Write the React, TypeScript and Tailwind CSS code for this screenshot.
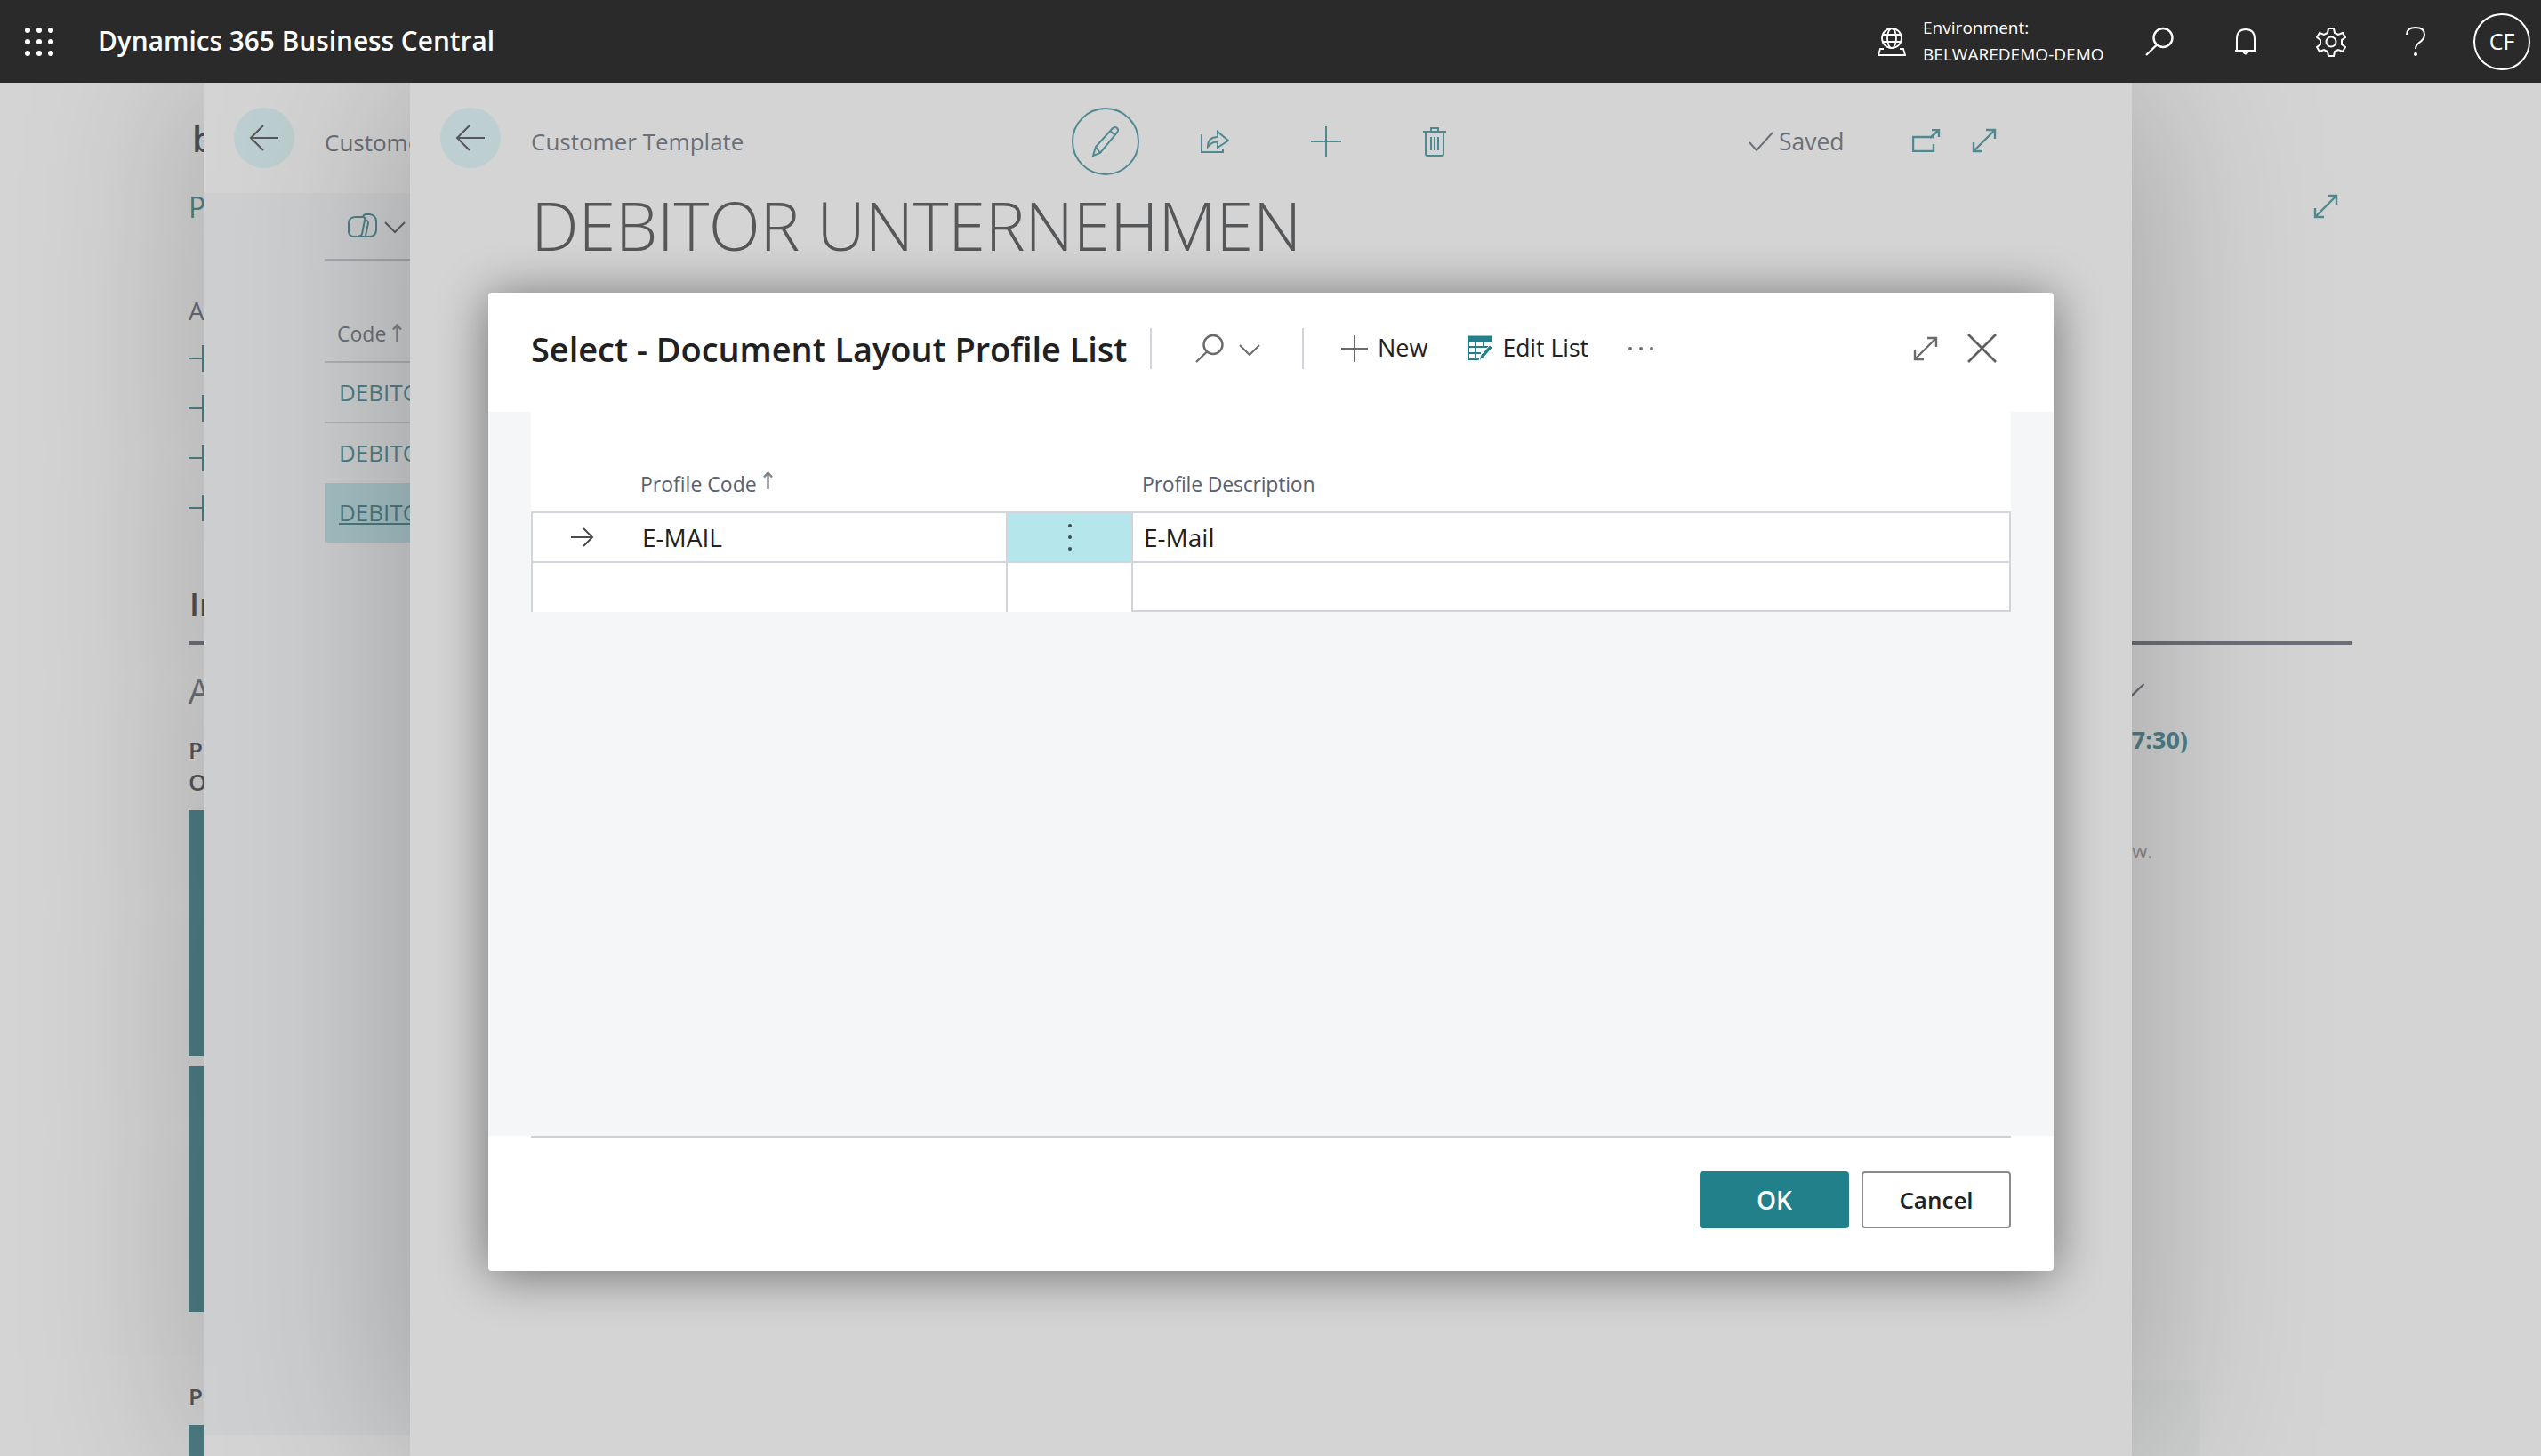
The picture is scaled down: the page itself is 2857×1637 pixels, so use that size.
import React from "react";

const font = { fontFamily: '"Open Sans", "Noto Sans", sans-serif' };

function Ico({ w, h, vb, color = "currentColor", sw = 2, children, className = "" }: { w: number; h: number; vb: string; color?: string; sw?: number; children: React.ReactNode; className?: string }) {
  return (
    <svg width={w} height={h} viewBox={vb} fill="none" stroke={color} strokeWidth={sw} className={`block shrink-0 ${className}`}>
      {children}
    </svg>
  );
}

const BackArrow = () => (
  <Ico w={34} h={30} vb="0 0 34 30" color="#555759">
    <path d="M33 15H2M16 1 2 15l14 14" />
  </Ico>
);

const Expand = ({ color, size = 30 }: { color: string; size?: number }) => (
  <Ico w={size} h={size} vb="0 0 30 30" color={color} sw={2.4}>
    <path d="M3 27 27 3M17 3h10v10M3 17v10h10" />
  </Ico>
);

const Search = ({ color, sw = 2.4 }: { color: string; sw?: number }) => (
  <Ico w={34} h={33} vb="0 0 34 33" color={color} sw={sw}>
    <circle cx="21" cy="12.5" r="10.5" />
    <path d="M14 20.5 2 32" />
  </Ico>
);

const SortUp = ({ color }: { color: string }) => (
  <Ico w={11} h={20} vb="0 0 11 20" color={color} sw={2.4}>
    <path d="M5.5 20V2M1 6.5 5.5 1.5 10 6.5" />
  </Ico>
);

function BackgroundPage() {
  return (
    <div className="absolute inset-0 bg-[#d4d4d4] pl-[212px] text-[#55585e]">
      <div className="relative h-full w-[2432px]">
        <div className="pt-[41px] pl-[4px] text-[40px] leading-[44px] font-semibold text-[#4f5154]">b</div>
        <div className="mt-[35px] text-[32px] leading-[40px] text-[#4f8187]">P</div>
        <div className="mt-[77px] text-[28px] leading-[38px] text-[#696c75]">A</div>
        <div className="flex flex-col gap-[26px] mt-[20px]">
          {[0, 1, 2, 3].map((i) => (
            <Ico key={i} w={18} h={30} vb="0 0 18 30" color="#4f8187">
              <path d="M0 15h17M16 0v30" />
            </Ico>
          ))}
        </div>
        <div className="mt-[72px] pl-[1px] text-[36px] leading-[44px] font-semibold text-[#4f5154]">In</div>
        <div className="mt-[19px] h-[4px] bg-[#6c6f79]" />
        <div className="mt-[28px] flex justify-between items-center text-[38px] leading-[46px] text-[#6c6f79]">
          <span>A</span>
          <Ico w={30} h={16} vb="0 0 30 16" color="#6c6f79" sw={1.6} className="mr-[233px]">
            <path d="M0 30 30 1" />
            <path d="M14 15 29 1" />
          </Ico>
        </div>
        <div className="mt-[26px] flex justify-between items-start text-[26px] leading-[36px] font-semibold text-[#55575a]">
          <span>P</span>
          <span className="-mt-[11px] text-[#4f8187] font-bold text-[27px] mr-[184px]">(11:17:30)</span>
        </div>
        <div className="text-[26px] leading-[36px] font-semibold text-[#55575a]">O</div>
        <div className="mt-[14px] flex justify-between items-start">
          <div className="w-[40px] h-[276px] bg-[#4f7d83]" />
          <span className="mt-[30px] mr-[224px] text-[22px] leading-[30px] text-[#8a8a8a]">w.</span>
        </div>
        <div className="mt-[12px] w-[40px] h-[276px] bg-[#4f7d83]" />
        <div className="mt-[77px] flex justify-between items-start h-[36px]">
          <span className="text-[26px] leading-[36px] font-semibold text-[#55575a]">P</span>
          <div className="mr-[170px] w-[200px] h-[90px] bg-[#cfd1d1]" />
        </div>
        <div className="mt-[14px] w-[40px] h-[60px] bg-[#4f7d83]" />
      </div>
    </div>
  );
}

function ListPanel() {
  return (
    <div className="absolute left-[229px] top-0 bottom-0 w-[400px] flex flex-col bg-[#d4d4d4] shadow-[0_0_200px_rgba(0,0,0,0.26)]">
      <div className="h-[124px] flex items-start pt-[28px] pl-[34px]">
        <div className="w-[68px] h-[68px] rounded-full bg-[#bdcfd0] flex items-center justify-center">
          <BackArrow />
        </div>
        <span className="ml-[34px] text-[26px] leading-[78px] text-[#6b6f78]">Customer</span>
      </div>
      <div className="flex-1 bg-[#cdcfd0] pl-[136px]">
        <div className="h-[76px] border-b-2 border-[#a9abb2] flex items-center pl-[26px] gap-[8px]">
          <Ico w={33} h={28} vb="0 0 33 28" color="#4f8187" sw={2}>
            <path d="M9 4h8q3 0 2 4l-3 15q-1 3-4 3H7q-5 0-6-5V10q1-6 8-6Z" />
            <path d="M17 4l1-2q1-1 3-1h4q6 1 7 7v11q-1 7-7 7h-9q-2 0-4-1" />
            <path d="M19 8q4-1 4 3l-3 14" />
          </Ico>
          <Ico w={24} h={14} vb="0 0 24 14" color="#5c5e62" className="mt-[4px]">
            <path d="M1 1l11 11L23 1" />
          </Ico>
        </div>
        <div className="h-[115px] flex items-end pb-[13px] pl-[14px] text-[23px] leading-[36px] text-[#6b6f78] gap-[7px] border-b-2 border-[#b0b1b3]">
          Code
          <span className="pb-[9px]">
            <SortUp color="#808285" />
          </span>
        </div>
        <div className="h-[68px] flex items-center pl-[16px] text-[26px] text-[#4f8187] border-b-2 border-[#b0b1b3]">DEBITOR</div>
        <div className="h-[67px] flex items-center pl-[16px] text-[26px] text-[#4f8187]">DEBITOR</div>
        <div className="h-[67px] flex items-center pl-[16px] text-[26px] text-[#4d7a80] underline bg-[#a5c1c5]">DEBITOR</div>
      </div>
      <div className="h-[24px]" />
    </div>
  );
}

function CardPanel() {
  return (
    <div className="absolute left-[461px] top-0 bottom-0 w-[1936px] bg-[#d4d4d4] shadow-[0_0_200px_rgba(0,0,0,0.26)]">
      <div className="flex items-center pt-[28px] pl-[34px]">
        <div className="self-start w-[68px] h-[68px] rounded-full bg-[#bdcfd0] flex items-center justify-center">
          <BackArrow />
        </div>
        <span className="ml-[34px] w-[608px] text-[26px] leading-[76px] text-[#6b6f78]">Customer Template</span>
        <div className="w-[76px] h-[76px] rounded-full border-2 border-[#4f8a90] flex items-center justify-center">
          <Ico w={32} h={36} vb="0 0 32 36" color="#4f8a90">
            <path d="M2 34 5 24 24 3q3-2 5 0t0 5L10 31l-8 3ZM5 24l5 7M21 6l6 5" />
          </Ico>
        </div>
        <div className="ml-[69px] -mt-[4px]">
          <Ico w={32} h={30} vb="0 0 32 30" color="#4f8a90">
            <path d="M1 9v20h24v-4M8 23q0-11 11-11V6l12 10-12 8v-6q-6-1-11 5Z" />
          </Ico>
        </div>
        <div className="ml-[92px]">
          <Ico w={34} h={34} vb="0 0 34 34" color="#4f8a90">
            <path d="M0 17h34M17 0v34" />
          </Ico>
        </div>
        <div className="ml-[92px]">
          <Ico w={26} h={34} vb="0 0 26 34" color="#4f8a90">
            <path d="M0 6h26M3 6v25q0 2 2 2h16q2 0 2-2V6M9 6V2h8v4M9 12v15M13 12v15M17 12v15" />
          </Ico>
        </div>
        <div className="ml-[340px]">
          <Ico w={28} h={24} vb="0 0 28 24" color="#6b6f78">
            <path d="M1 13l8 9L27 2" />
          </Ico>
        </div>
        <span className="ml-[6px] text-[26.5px] text-[#6b6f78] leading-[76px]">Saved</span>
        <div className="ml-[76px] -mt-[2px]">
          <Ico w={32} h={26} vb="0 0 32 26" color="#4f8a90" sw={2.4}>
            <path d="M24 9H1v16h23v-8M20 10l10-9M22 1h8v8" />
          </Ico>
        </div>
        <div className="ml-[34px] -mt-[2px]">
          <Expand color="#4f8a90" />
        </div>
      </div>
      <div className="mt-[10px] pl-[136px] text-[76px] leading-[92px] tracking-[-0.5px] font-light text-[#555759]">DEBITOR UNTERNEHMEN</div>
    </div>
  );
}

function Modal() {
  return (
    <div className="absolute left-[549px] top-[236px] w-[1760px] h-[1100px] bg-white rounded-[4px] shadow-[0_4px_55px_rgba(0,0,0,0.48)] flex flex-col overflow-hidden">
      <div className="h-[134px] pb-[9px] pl-[48px] pr-[64px] flex items-center text-[#212121]">
        <div className="w-[698px] h-[46px] pt-[2px] border-r-2 border-[#d1d5db] flex items-center text-[38px] tracking-[-0.05px] font-semibold whitespace-nowrap">
          Select - Document Layout Profile List
        </div>
        <div className="ml-[48px]">
          <Search color="#6b6b6b" />
        </div>
        <div className="ml-[16px] mt-[4px]">
          <Ico w={24} h={13} vb="0 0 24 13" color="#6b6b6b">
            <path d="M1 1l11 11L23 1" />
          </Ico>
        </div>
        <div className="ml-[47px] w-[2px] h-[46px] bg-[#d1d5db]" />
        <div className="ml-[42px]">
          <Ico w={30} h={30} vb="0 0 30 30" color="#6b6b6b">
            <path d="M0 15h30M15 0v30" />
          </Ico>
        </div>
        <span className="ml-[11px] text-[27px]">New</span>
        <div className="ml-[45px]">
          <Ico w={29} h={29} vb="0 0 29 29" color="#22808a" sw={2}>
            <path d="M0 1.5h27v5H0z" fill="#22808a" />
            <path d="M1 6v21h14M1 13h24M1 20h14M9 6v21M18 6v7" />
            <path d="M13 28l2-6L25 11l3 3-10 11-5 3Z" fill="#22808a" stroke="#ffffff" strokeWidth="1" />
          </Ico>
        </div>
        <span className="ml-[10px] text-[26.5px]">Edit List</span>
        <div className="ml-[45px] flex gap-[8px]">
          <span className="w-[4px] h-[4px] rounded-full bg-[#6b6b6b]" />
          <span className="w-[4px] h-[4px] rounded-full bg-[#6b6b6b]" />
          <span className="w-[4px] h-[4px] rounded-full bg-[#6b6b6b]" />
        </div>
        <div className="ml-auto">
          <Expand color="#6b6b6b" />
        </div>
        <div className="ml-[32px]">
          <Ico w={33} h={33} vb="0 0 33 33" color="#5f5f5f" sw={2.6}>
            <path d="M1 1l31 31M32 1 1 32" />
          </Ico>
        </div>
      </div>

      <div className="flex-1 bg-[#f5f6f8] px-[48px]">
        <div className="bg-white">
          <div className="h-[112px] flex items-end pb-[13px] text-[23px] text-[#59616f] leading-[36px]">
            <div className="w-[675px] pl-[123px] flex gap-[7px]">
              Profile Code
              <span className="pt-[4px]">
                <SortUp color="#808285" />
              </span>
            </div>
            <div className="pl-[12px] tracking-[-0.2px]">Profile Description</div>
          </div>
          <div className="flex h-[56px] border-t-2 border-[#d1d5db] text-[28px] text-[#212121]">
            <div className="w-[534px] border-l-2 border-[#d1d5db] flex items-center pl-[43px]">
              <Ico w={26} h={22} vb="0 0 26 22" color="#4b4b4b">
                <path d="M0 11h24M14 1l10 10-10 10" />
              </Ico>
              <span className="ml-[54px]">E-MAIL</span>
            </div>
            <div className="w-[141px] border-l-2 border-[#d1d5db] bg-[#b5e6eb] flex flex-col items-center justify-center gap-[9px]">
              <span className="w-[4px] h-[4px] rounded-full bg-[#3f4a4d]" />
              <span className="w-[4px] h-[4px] rounded-full bg-[#3f4a4d]" />
              <span className="w-[4px] h-[4px] rounded-full bg-[#3f4a4d]" />
            </div>
            <div className="flex-1 border-x-2 border-[#d1d5db] flex items-center pl-[12px]">E-Mail</div>
          </div>
          <div className="flex h-[57px] border-t-2 border-[#d1d5db]">
            <div className="w-[534px] border-l-2 border-[#d1d5db]" />
            <div className="w-[141px] border-l-2 border-[#d1d5db]" />
            <div className="flex-1 border-x-2 border-b-2 border-[#d1d5db]" />
          </div>
        </div>
      </div>

      <div className="h-[152px] px-[48px]">
        <div className="h-[2px] bg-[#cfcfcf]" />
        <div className="pt-[38px] flex justify-end gap-[14px] font-semibold">
          <button className="w-[168px] h-[64px] rounded-[4px] bg-[#22808a] text-white text-[28px]">OK</button>
          <button className="w-[168px] h-[64px] rounded-[4px] border-2 border-[#8a8a8a] text-[#212121] text-[26px]">Cancel</button>
        </div>
      </div>
    </div>
  );
}

export default function App() {
  return (
    <div className="w-[2857px] h-[1637px] flex flex-col overflow-hidden" style={font}>
      <header className="relative z-10 h-[93px] shrink-0 bg-[#2a2a2a] text-white flex items-center">
        <div className="ml-[28px] grid grid-cols-3 gap-[7px]">
          {Array.from({ length: 9 }).map((_, i) => (
            <span key={i} className="w-[6px] h-[6px] rounded-full bg-white" />
          ))}
        </div>
        <div className="ml-[50px] text-[29.8px] font-semibold whitespace-nowrap">Dynamics 365 Business Central</div>
        <div className="ml-auto flex items-center mr-[12px]">
          <Ico w={32} h={32} vb="0 0 32 32" color="#ffffff" sw={1.8}>
            <circle cx="16" cy="12" r="11" />
            <ellipse cx="16" cy="12" rx="5" ry="11" />
            <path d="M5 8h22M5 16h22M7 24H3l-2 7h30l-2-7h-4" />
          </Ico>
          <div className="ml-[19px] w-[249px] text-[19px] leading-[30px] -mt-[2px] tracking-[0.03px]">
            <div>Environment:</div>
            <div>BELWAREDEMO-DEMO</div>
          </div>
          <Search color="#ffffff" />
          <div className="ml-[67px]">
            <Ico w={26} h={30} vb="0 0 26 30" color="#ffffff">
              <path d="M3 25V12Q3 1 13 1t10 11v13M1 25h24M10 26q3 5 6 0" />
            </Ico>
          </div>
          <div className="ml-[66px]">
            <Ico w={34} h={34} vb="0 0 34 34" color="#ffffff">
              <circle cx="17" cy="17" r="5.5" />
              <path d="M14 2h6l1 5 4 2 5-2 3 5-4 3v5l4 3-3 5-5-2-4 2-1 5h-6l-1-5-4-2-5 2-3-5 4-3v-5l-4-3 3-5 5 2 4-2 1-5Z" />
            </Ico>
          </div>
          <div className="ml-[67px]">
            <Ico w={22} h={33} vb="0 0 22 33" color="#ffffff">
              <path d="M1 9q0-8 10-8t10 8q0 5-6 9-4 3-4 7" />
              <circle cx="11" cy="31" r="1" fill="#ffffff" />
            </Ico>
          </div>
          <div className="ml-[54px] w-[64px] h-[64px] rounded-full border-2 border-white flex items-center justify-center text-[25px]">CF</div>
        </div>
      </header>
      <main className="relative flex-1 overflow-hidden">
        <BackgroundPage />
        <div className="absolute left-[2600px] top-[124px]">
          <Expand color="#4f8a90" />
        </div>
        <ListPanel />
        <CardPanel />
        <Modal />
      </main>
    </div>
  );
}
